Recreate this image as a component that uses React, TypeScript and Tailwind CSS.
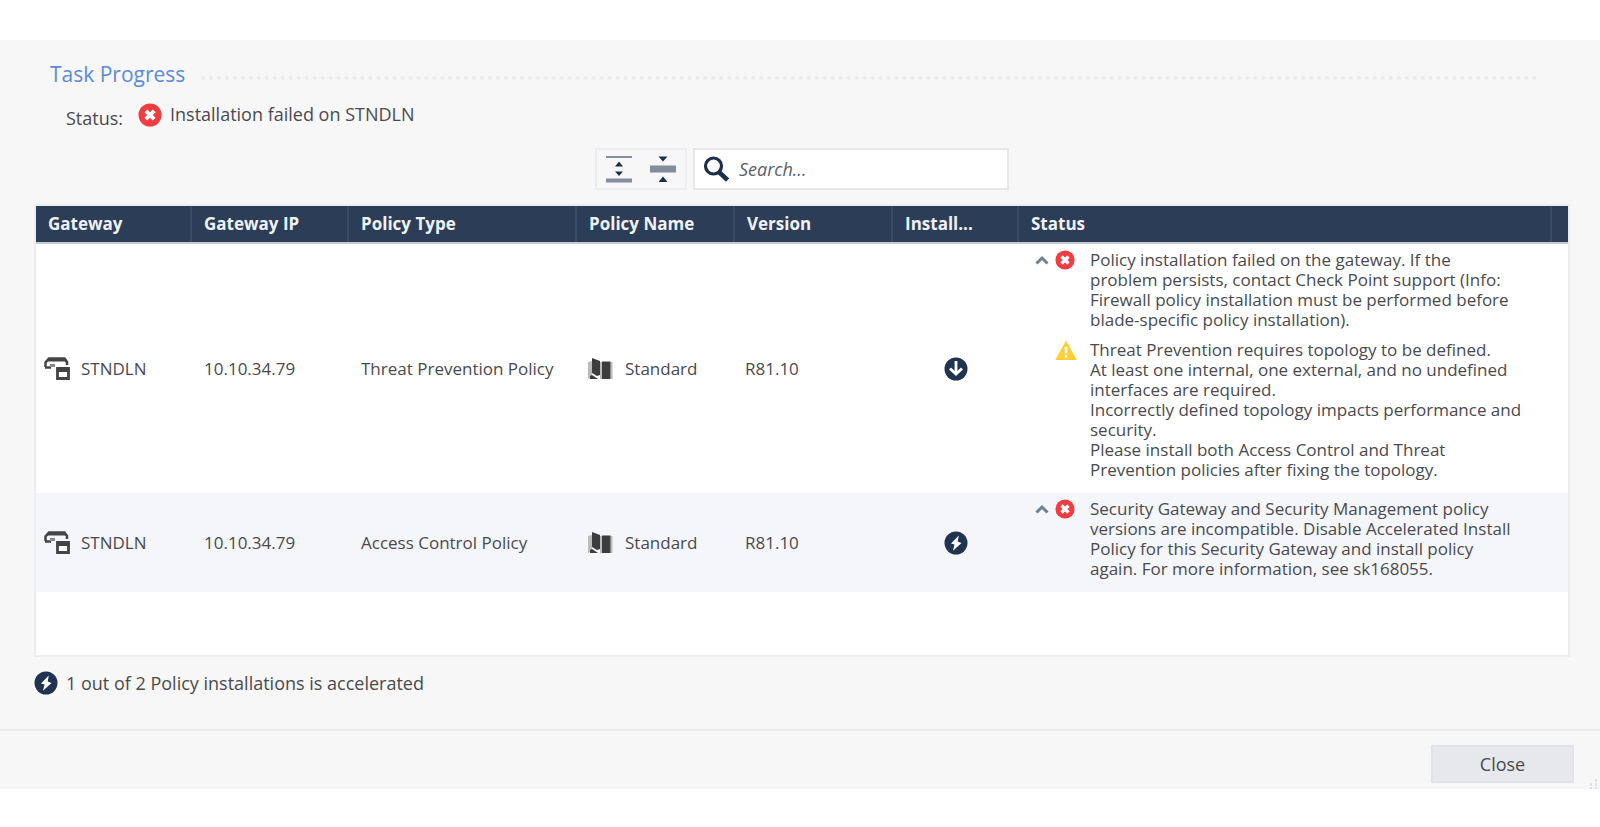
import type { ReactNode } from "react"

type Message = { level: "error" | "warning"; text: string }

type Task = {
  gateway: string
  ip: string
  type: string
  policy: string
  version: string
  accelerated: boolean
  messages: Message[]
}

const TASKS: Task[] = [
  {
    gateway: "STNDLN",
    ip: "10.10.34.79",
    type: "Threat Prevention Policy",
    policy: "Standard",
    version: "R81.10",
    accelerated: false,
    messages: [
      {
        level: "error",
        text: "Policy installation failed on the gateway. If the\nproblem persists, contact Check Point support (Info:\nFirewall policy installation must be performed before\nblade-specific policy installation).",
      },
      {
        level: "warning",
        text: "Threat Prevention requires topology to be defined.\nAt least one internal, one external, and no undefined\ninterfaces are required.\nIncorrectly defined topology impacts performance and\nsecurity.\nPlease install both Access Control and Threat\nPrevention policies after fixing the topology.",
      },
    ],
  },
  {
    gateway: "STNDLN",
    ip: "10.10.34.79",
    type: "Access Control Policy",
    policy: "Standard",
    version: "R81.10",
    accelerated: true,
    messages: [
      {
        level: "error",
        text: "Security Gateway and Security Management policy\nversions are incompatible. Disable Accelerated Install\nPolicy for this Security Gateway and install policy\nagain. For more information, see sk168055.",
      },
    ],
  },
]

function ErrorIcon({ className }: { className: string }) {
  return (
    <svg viewBox="0 0 24 24" className={className} aria-hidden="true">
      <circle cx="12" cy="12" r="11.5" fill="#f23c3f" />
      <path d="M7.8 7.8l8.4 8.4M16.2 7.8l-8.4 8.4" stroke="#fff" strokeWidth="4" />
    </svg>
  )
}

function WarningIcon() {
  return (
    <svg viewBox="0 0 22 20" className="h-5 w-[22px]" aria-hidden="true">
      <path d="M11 0.5L21.8 20H0.2z" fill="#ffd035" />
      <path d="M9.7 7h2.6v6.5H9.7zM9.7 15h2.6v2.4H9.7z" fill="#fff" />
    </svg>
  )
}

function BoltIcon() {
  return (
    <svg viewBox="0 0 24 24" className="size-6" aria-hidden="true">
      <circle cx="12" cy="12" r="11.5" fill="#203350" />
      <path d="M14.8 4.500L7 12.500l3.500 1L9 19.800 17.500 12l-3.800-1.500z" fill="#fff" />
    </svg>
  )
}

function DownIcon() {
  return (
    <svg viewBox="0 0 24 24" className="size-6" aria-hidden="true">
      <circle cx="12" cy="12" r="11.5" fill="#203350" />
      <path d="M12 4v13M6 11.500l6 5.500 6-5.500" fill="none" stroke="#fff" strokeWidth="2.800" />
    </svg>
  )
}

function GatewayIcon() {
  return (
    <svg viewBox="0 0 27 25" className="h-[25px] w-[27px] shrink-0" aria-hidden="true">
      <path d="M1.500 11V6.500L5 2.500h15.500L23 6v3" fill="none" stroke="#444" strokeWidth="2.500" />
      <path d="M4.500 2h16l1.500 3.500H3z" fill="#444" />
      <path d="M1 11.500h6" stroke="#444" strokeWidth="2.500" />
      <path d="M6 8h5v3H6z" fill="#888" />
      <path d="M13.500 12.500h11v10h-11z" fill="#fff" stroke="#444" strokeWidth="2.800" />
      <path d="M12.500 14.500h13" stroke="#444" strokeWidth="3" />
    </svg>
  )
}

function PolicyIcon() {
  return (
    <svg viewBox="0 0 26 24" className="h-6 w-[26px] shrink-0" aria-hidden="true">
      <path d="M1 5l4-1v16l-4 2z" fill="#bbb" />
      <path d="M5 1l8 3v14l-3 1-5-3z" fill="#3d3d3d" />
      <path d="M3 22v-3l2-1 6 4z" fill="#3d3d3d" />
      <path d="M13 5h2v17h-2zM23.500 5h2v17h-2z" fill="#bbb" />
      <path d="M15 4.500h8.500V22H15z" fill="#3d3d3d" />
    </svg>
  )
}

function ExpandIcon() {
  return (
    <svg viewBox="0 0 26 28" className="h-7 w-[26px]" aria-hidden="true">
      <path d="M0 2h26" stroke="#848d9c" strokeWidth="2" />
      <path d="M0 25.500h26" stroke="#848d9c" strokeWidth="4" />
      <path d="M9 11.500l4-5 4 5zM9 16.500l4 4.500 4-4.500z" fill="#1c2f4a" />
    </svg>
  )
}

function CollapseIcon() {
  return (
    <svg viewBox="0 0 26 28" className="h-7 w-[26px]" aria-hidden="true">
      <path d="M0 14h26" stroke="#848d9c" strokeWidth="7" />
      <path d="M8.500 1.500l4.500 5 4.500-5zM8.500 27l4.500-5.500 4.500 5.500z" fill="#1c2f4a" />
    </svg>
  )
}

function SearchIcon() {
  return (
    <svg viewBox="0 0 26 26" className="size-[26px] shrink-0" aria-hidden="true">
      <circle cx="10.500" cy="10" r="8" fill="none" stroke="#1c2f4a" strokeWidth="3.200" />
      <path d="M16 16l8.500 8" stroke="#1c2f4a" strokeWidth="4.500" />
    </svg>
  )
}

function Th({ children }: { children?: ReactNode }) {
  return (
    <th scope="col" className="border-b-2 border-b-[#c5cad2] p-0 text-left font-bold">
      <div className="flex h-9 items-center border-r-2 border-[#384a66] pl-3">{children}</div>
    </th>
  )
}

function StatusMessages({ messages }: { messages: Message[] }) {
  return (
    <div className="flex flex-col gap-2.5 pt-1.5 pb-[13px]">
      {messages.map((m, i) => (
        <div key={i} className="flex items-start">
          <div className="flex w-9 shrink-0 items-center justify-start pl-4">
            {i === 0 && (
              <button type="button" aria-label="Collapse messages" className="flex h-5 items-center">
                <svg viewBox="0 0 14 10" className="h-2.5 w-3.5" aria-hidden="true">
                  <path d="M1.500 8.500L7 3l5.500 5.500" fill="none" stroke="#71808f" strokeWidth="3" />
                </svg>
              </button>
            )}
          </div>
          <div className="flex w-[35px] shrink-0">
            {m.level === "error" ? <ErrorIcon className="size-5" /> : <WarningIcon />}
          </div>
          <p className="whitespace-pre">{m.text}</p>
        </div>
      ))}
    </div>
  )
}

export default function App() {
  return (
    <div className="min-h-screen bg-white pt-10 font-['Open_Sans',sans-serif] text-[17px] text-[#4a4a4e]">
      <main className="bg-[#f7f7f7]">
        <div className="pr-[30px] pl-[34px]">
          {/* Title */}
          <div className="flex items-center gap-4 pt-5 pr-8 pl-4">
            <h1 className="text-[21px] leading-7 text-[#5b8bd6]">Task Progress</h1>
            <div className="mt-2 flex-1 border-t-4 border-dotted border-[#ebebee]" />
          </div>

          {/* Overall status */}
          <div className="flex items-start pt-3.5 pl-8 text-lg leading-6">
            <span className="w-[72px] pt-1">Status:</span>
            <ErrorIcon className="mt-px size-6" />
            <span className="pl-2">Installation failed on STNDLN</span>
          </div>

          {/* Toolbar */}
          <div className="flex justify-center gap-1.5 pt-[18px]">
            <div className="flex h-[42px] w-[92px] items-center justify-around border-2 border-[#ecedf0]">
              <button type="button" aria-label="Expand all">
                <ExpandIcon />
              </button>
              <button type="button" aria-label="Collapse all">
                <CollapseIcon />
              </button>
            </div>
            <label className="flex h-[42px] w-[316px] items-center gap-2.5 border-2 border-[#e5e7ea] bg-white pl-2">
              <SearchIcon />
              <input
                type="text"
                aria-label="Search"
                placeholder="Search..."
                className="w-full min-w-0 text-lg italic outline-none placeholder:text-[#606064]"
              />
            </label>
          </div>

          {/* Policy installations */}
          <div className="mt-3.5 min-h-[453px] border-2 border-[#ebedf0] bg-white">
            <table className="w-full table-fixed border-separate border-spacing-0">
              <colgroup>
                <col className="w-[156px]" />
                <col className="w-[157px]" />
                <col className="w-[228px]" />
                <col className="w-[158px]" />
                <col className="w-[158px]" />
                <col className="w-[126px]" />
                <col />
                <col className="w-4" />
              </colgroup>
              <thead>
                <tr className="bg-[#2c3d57] text-[17px] text-[#f0f2f5]">
                  <Th>Gateway</Th>
                  <Th>Gateway IP</Th>
                  <Th>Policy Type</Th>
                  <Th>Policy Name</Th>
                  <Th>Version</Th>
                  <Th>Install...</Th>
                  <Th>Status</Th>
                  <td className="border-b-2 border-[#c5cad2]" />
                </tr>
              </thead>
              <tbody className="leading-5">
                {TASKS.map((t) => (
                  <tr key={t.type} className="even:bg-[#f5f6f9]">
                    <td>
                      <div className="flex items-center gap-2.5 pl-2">
                        <GatewayIcon />
                        {t.gateway}
                      </div>
                    </td>
                    <td className="pl-3">{t.ip}</td>
                    <td className="pl-3">{t.type}</td>
                    <td>
                      <div className="flex items-center gap-3 pl-2.5">
                        <PolicyIcon />
                        {t.policy}
                      </div>
                    </td>
                    <td className="pl-2.5">{t.version}</td>
                    <td>
                      <div className="flex justify-center">{t.accelerated ? <BoltIcon /> : <DownIcon />}</div>
                    </td>
                    <td colSpan={2} className="align-top">
                      <StatusMessages messages={t.messages} />
                    </td>
                  </tr>
                ))}
              </tbody>
            </table>
          </div>

          <div className="flex items-center gap-2 pt-3.5 pb-[34px] text-lg leading-6">
            <BoltIcon />
            <span>1 out of 2 Policy installations is accelerated</span>
          </div>
        </div>

        {/* Footer */}
        <footer className="flex items-end justify-between border-t-2 border-[#ebebec] pt-3.5">
          <div className="flex flex-1 justify-end pb-1.5">
            <button type="button" className="h-[38px] w-[143px] border-2 border-[#e2e3e6] bg-[#e7e8eb] text-lg leading-6">
              Close
            </button>
          </div>
          <svg viewBox="0 0 26 14" className="h-3.5 w-[26px]" aria-hidden="true">
            <path d="M17 8v6M22 4v10" stroke="#dbe0e7" strokeWidth="2" strokeDasharray="3 1" />
          </svg>
        </footer>
      </main>
    </div>
  )
}
